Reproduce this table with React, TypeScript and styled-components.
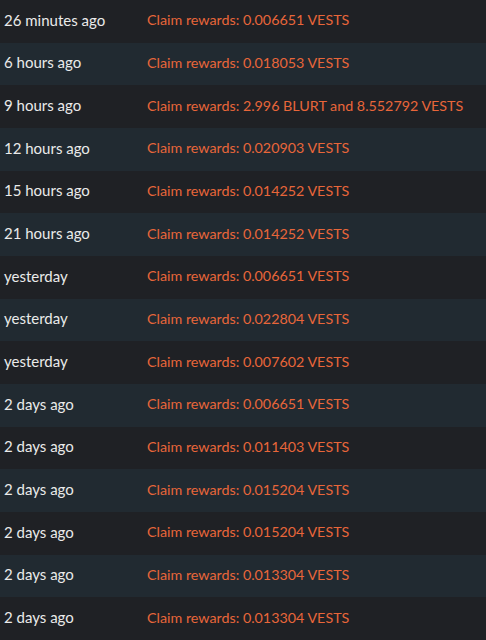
import React from "react";
import styled, { createGlobalStyle } from "styled-components";

const Global = createGlobalStyle`
  html, body { margin: 0; padding: 0; background: #1f2125; }
  body { font-family: Lato, "Noto Sans", sans-serif; }
`;

const Table = styled.div`
  display: flex;
  flex-direction: column;
  width: 486px;
`;

const Row = styled.div<{ $alt: boolean }>`
  display: grid;
  grid-template-columns: 143px 1fr;
  align-items: center;
  height: 42.667px;
  background: ${(p) => (p.$alt ? "#212a31" : "#1f2125")};
  font-size: 15px;
  padding-left: 4px;
  box-sizing: border-box;
  padding-bottom: 3px;
`;

const When = styled.span`
  color: #eaeaea;
  white-space: nowrap;
`;

const Op = styled.span`
  color: #e8663a;
  font-size: 14.3px;
  white-space: nowrap;
`;

const rows: [string, string][] = [
  ["26 minutes ago", "Claim rewards: 0.006651 VESTS"],
  ["6 hours ago", "Claim rewards: 0.018053 VESTS"],
  ["9 hours ago", "Claim rewards: 2.996 BLURT and 8.552792 VESTS"],
  ["12 hours ago", "Claim rewards: 0.020903 VESTS"],
  ["15 hours ago", "Claim rewards: 0.014252 VESTS"],
  ["21 hours ago", "Claim rewards: 0.014252 VESTS"],
  ["yesterday", "Claim rewards: 0.006651 VESTS"],
  ["yesterday", "Claim rewards: 0.022804 VESTS"],
  ["yesterday", "Claim rewards: 0.007602 VESTS"],
  ["2 days ago", "Claim rewards: 0.006651 VESTS"],
  ["2 days ago", "Claim rewards: 0.011403 VESTS"],
  ["2 days ago", "Claim rewards: 0.015204 VESTS"],
  ["2 days ago", "Claim rewards: 0.015204 VESTS"],
  ["2 days ago", "Claim rewards: 0.013304 VESTS"],
  ["2 days ago", "Claim rewards: 0.013304 VESTS"],
];

export default function App() {
  return (
    <>
      <Global />
      <Table>
        {rows.map(([w, o], i) => (
          <Row key={i} $alt={i % 2 === 1}>
            <When>{w}</When>
            <Op>{o}</Op>
          </Row>
        ))}
      </Table>
    </>
  );
}
